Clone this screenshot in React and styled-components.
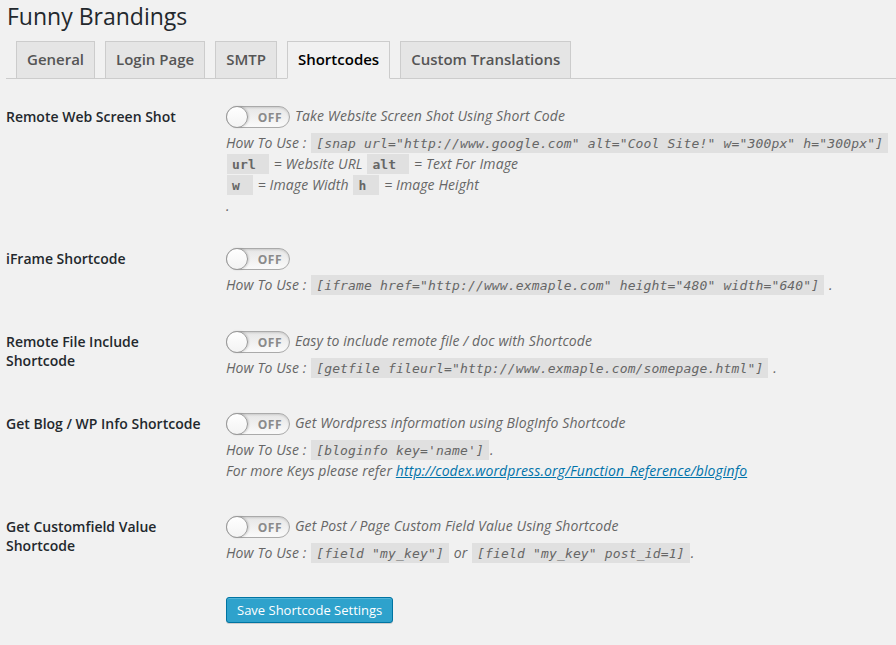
import React from 'react'
import styled, { createGlobalStyle } from 'styled-components'

const GlobalStyle = createGlobalStyle`
  html, body {
    margin: 0;
    padding: 0;
    background: #f1f1f1;
  }
  body {
    font-family: "Open Sans", "Liberation Sans", sans-serif;
    font-size: 14px;
    color: #444;
  }
`

const Wrap = styled.div`
  padding: 0 0 20px 6px;
`

const Title = styled.h1`
  margin: 0;
  padding: 2px 0 0 1px;
  font-size: 23px;
  font-weight: 400;
  line-height: 29px;
  color: #23282d;
`

const TabBar = styled.nav`
  display: flex;
  gap: 10px;
  padding: 10px 0 0 10px;
  border-bottom: 1px solid #ccc;
`

const Tab = styled.a`
  display: block;
  margin-bottom: -1px;
  padding: 5px 10px 7px;
  font-size: 15px;
  font-weight: 600;
  line-height: 24px;
  text-decoration: none;
  border: 1px solid #ccc;
  border-bottom-color: ${p => (p.$active ? '#f1f1f1' : '#ccc')};
  background: ${p => (p.$active ? '#f1f1f1' : '#e5e5e5')};
  color: ${p => (p.$active ? '#000' : '#555')};
`

const Table = styled.div`
  padding-top: 9px;
`

const Row = styled.div`
  display: grid;
  grid-template-columns: 220px 1fr;
  padding: 18px 0 ${p => p.$bottom || 17}px;
`

const Label = styled.div`
  width: 200px;
  padding-top: 1px;
  font-weight: 600;
  line-height: 19px;
  color: #23282d;
`

const Field = styled.div`
  color: #666;
  font-style: italic;
  line-height: 21px;
  letter-spacing: 0.1px;
`

const ToggleLine = styled.div`
  display: flex;
  align-items: center;
  gap: 5px;
  height: 22px;
  margin-bottom: 4px;

  span {
    position: relative;
    top: -2px;
  }
`

const Switch = styled.div`
  position: relative;
  width: 62px;
  height: 20px;
  border: 1px solid #aaa;
  border-radius: 11px;
  background: linear-gradient(#e6e6e6, #fafafa);
  box-shadow: inset 0 1px 2px rgba(0, 0, 0, 0.12);
  font-style: normal;
  flex: none;
`

const Knob = styled.div`
  position: absolute;
  left: -1px;
  top: -1px;
  width: 20px;
  height: 20px;
  border: 1px solid #999;
  border-radius: 50%;
  background: linear-gradient(#fff, #f3f3f3);
  box-shadow: 1px 0 2px rgba(0, 0, 0, 0.15);
`

const SwitchText = styled.b`
  position: absolute;
  right: 7px;
  top: 2px;
  font-family: "Open Sans", sans-serif;
  font-size: 12px;
  font-weight: 700;
  line-height: 17px;
  letter-spacing: 0.5px;
  color: #8a8a8a;
`

const Line = styled.div``

const Code = styled.code`
  padding: 3px 5px 2px;
  margin: 0 1px;
  background: rgba(0, 0, 0, 0.07);
  font-family: "DejaVu Sans Mono", "Liberation Mono", monospace;
  font-size: 13px;
  line-height: 1;
  letter-spacing: 0.16px;
  font-style: ${p => (p.$key ? 'normal' : 'italic')};
  font-weight: ${p => (p.$key ? 700 : 400)};
  white-space: pre;
  color: #666;
`

const Link = styled.a`
  color: #0073aa;
  text-decoration: underline;
`

const Submit = styled.div`
  padding-left: 220px;
  margin-top: 17px;
`

const Button = styled.button`
  height: 26px;
  padding: 0 10px 1px;
  font-family: "Open Sans", sans-serif;
  font-size: 13px;
  line-height: 24px;
  color: #fff;
  background: #2ea2cc;
  border: 1px solid #0074a2;
  border-radius: 3px;
  box-shadow: inset 0 1px 0 rgba(120, 200, 230, 0.5), 0 1px 0 rgba(0, 0, 0, 0.15);
  cursor: pointer;
`

function Toggle({ text }) {
  return (
    <ToggleLine>
      <Switch>
        <Knob />
        <SwitchText>OFF</SwitchText>
      </Switch>
      {text && <span>{text}</span>}
    </ToggleLine>
  )
}

const tabs = ['General', 'Login Page', 'SMTP', 'Shortcodes', 'Custom Translations']

export default function App() {
  return (
    <Wrap>
      <GlobalStyle />
      <Title>Funny Brandings</Title>
      <TabBar>
        {tabs.map(t => (
          <Tab key={t} $active={t === 'Shortcodes'}>{t}</Tab>
        ))}
      </TabBar>

      <Table>
        <Row $bottom={14}>
          <Label>Remote Web Screen Shot</Label>
          <Field>
            <Toggle text="Take Website Screen Shot Using Short Code" />
            <Line>
              How To Use : <Code>[snap url="http://www.google.com" alt="Cool Site!" w="300px" h="300px"]</Code>
            </Line>
            <Line>
              <Code $key>url </Code> = Website URL <Code $key>alt </Code> = Text For Image
            </Line>
            <Line>
              <Code $key>w </Code> = Image Width <Code $key>h </Code> = Image Height
            </Line>
            <Line>.</Line>
          </Field>
        </Row>

        <Row $bottom={18}>
          <Label>iFrame Shortcode</Label>
          <Field>
            <Toggle />
            <Line>
              How To Use : <Code>[iframe href="http://www.exmaple.com" height="480" width="640"]</Code> .
            </Line>
          </Field>
        </Row>

        <Row>
          <Label>Remote File Include Shortcode</Label>
          <Field>
            <Toggle text="Easy to include remote file / doc with Shortcode" />
            <Line>
              How To Use : <Code>[getfile fileurl="http://www.exmaple.com/somepage.html"]</Code> .
            </Line>
          </Field>
        </Row>

        <Row>
          <Label>Get Blog / WP Info Shortcode</Label>
          <Field>
            <Toggle text="Get Wordpress information using BlogInfo Shortcode" />
            <Line>
              How To Use : <Code>[bloginfo key='name']</Code>.
            </Line>
            <Line>
              For more Keys please refer{' '}
              <Link href="#">http://codex.wordpress.org/Function_Reference/bloginfo</Link>
            </Line>
          </Field>
        </Row>

        <Row>
          <Label>Get Customfield Value Shortcode</Label>
          <Field>
            <Toggle text="Get Post / Page Custom Field Value Using Shortcode" />
            <Line>
              How To Use : <Code>[field "my_key"]</Code> or <Code>[field "my_key" post_id=1]</Code>.
            </Line>
          </Field>
        </Row>
      </Table>

      <Submit>
        <Button>Save Shortcode Settings</Button>
      </Submit>
    </Wrap>
  )
}
